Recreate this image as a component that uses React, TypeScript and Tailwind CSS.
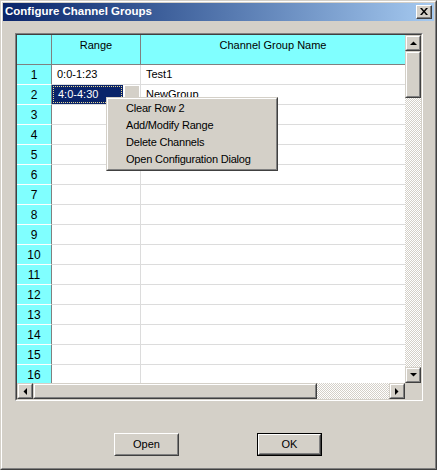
import React from "react";

// Win2k raised look used by scroll bar parts
function ScrollPart({ className = "", children }: { className?: string; children?: React.ReactNode }) {
  return (
    <div className={`bg-[#d4d0c8] border border-t-[#d4d0c8] border-l-[#d4d0c8] border-r-[#404040] border-b-[#404040] ${className}`}>
      <div className="w-full h-full border border-t-white border-l-white border-r-[#808080] border-b-[#808080] flex items-center justify-center">
        {children}
      </div>
    </div>
  );
}

function Arrow({ dir }: { dir: "up" | "down" | "left" | "right" }) {
  const pts = {
    up: "0,4 7,4 3.5,0.5",
    down: "0,0 7,0 3.5,3.5",
    left: "4,0 4,7 0.5,3.5",
    right: "0,0 0,7 3.5,3.5",
  }[dir];
  const vert = dir === "up" || dir === "down";
  return (
    <svg width={vert ? 7 : 4} height={vert ? 4 : 7} viewBox={vert ? "0 0 7 4" : "0 0 4 7"}>
      <polygon points={pts} fill="#000" />
    </svg>
  );
}

const dither =
  "[background-image:repeating-conic-gradient(#ffffff_0%_25%,#d4d0c8_0%_50%)] [background-size:2px_2px]";

function PushButton({ label, isDefault }: { label: string; isDefault?: boolean }) {
  const inner = (
    <div className="w-full h-full bg-[#d4d0c8] border border-t-white border-l-white border-r-[#404040] border-b-[#404040]">
      <div className="w-full h-full border border-t-[#d4d0c8] border-l-[#d4d0c8] border-r-[#808080] border-b-[#808080] flex items-center justify-center text-[11px]">
        {label}
      </div>
    </div>
  );
  return isDefault ? (
    <div className="w-[65px] h-[23px] border border-black">{inner}</div>
  ) : (
    <div className="w-[65px] h-[23px]">{inner}</div>
  );
}

export default function App() {
  const rows = Array.from({ length: 16 }, (_, i) => i + 1);
  const data: Record<number, [string, string]> = {
    1: ["0:0-1:23", "Test1"],
    2: ["4:0-4:30", "NewGroup"],
  };

  return (
    <div className="w-[437px] h-[470px] bg-[#d4d0c8] font-['Liberation_Sans',Arial,sans-serif] text-[11px] text-black border border-t-[#d4d0c8] border-l-[#d4d0c8] border-r-[#404040] border-b-[#404040]">
      <div className="h-full border border-t-white border-l-white border-r-[#808080] border-b-[#808080] p-px flex flex-col">
        {/* Title bar */}
        <div className="h-[18px] shrink-0 flex items-center justify-between pl-[2px] pr-[2px] bg-linear-to-r from-[#0a246a] to-[#a6caf0]">
          <span className="text-white font-bold text-[11.5px] leading-none">Configure Channel Groups</span>
          <div className="w-[16px] h-[14px] bg-[#d4d0c8] border border-t-white border-l-white border-r-[#404040] border-b-[#404040]">
            <div className="w-full h-full border-r border-b border-[#808080] flex items-center justify-center">
              <svg width="8" height="7" viewBox="0 0 8 7">
                <path d="M0 0h2l2 2.5L6 0h2L5 3.5 8 7H6L4 4.5 2 7H0l3-3.5z" fill="#000" />
              </svg>
            </div>
          </div>
        </div>

        {/* Grid frame (sunken) */}
        <div className="ml-[12px] mt-[12px] w-[408px] h-[368px] border border-t-[#808080] border-l-[#808080] border-r-white border-b-white">
          <div className="w-full h-full border border-t-[#404040] border-l-[#404040] border-r-[#d4d0c8] border-b-[#d4d0c8] flex flex-col">
            <div className="flex h-[348px]">
              {/* Cells */}
              <div className="w-[388px] h-full overflow-hidden relative bg-white">
                <div className="flex h-[30px] bg-[#80ffff] border-b border-[#808080]">
                  <div className="w-[35px] border-r border-[#808080]" />
                  <div className="w-[89px] border-r border-[#808080] text-center pt-[2px]">Range</div>
                  <div className="flex-1 text-center pt-[2px]">Channel Group Name</div>
                </div>
                {rows.map((r) => {
                  const d = data[r];
                  return (
                    <div key={r} className="flex h-[20px]">
                      <div className="w-[35px] bg-[#80ffff] border-r border-r-[#808080] border-b border-b-white flex items-center justify-center text-[12px]">
                        {r}
                      </div>
                      <div className="w-[89px] border-r border-b border-[#dcdcdc] flex items-center">
                        {r === 2 ? (
                          <>
                            <div className="w-[71px] h-full bg-[#0a246a] text-white p-px">
                              <div className="w-full h-full border border-dotted border-[#e8d890] flex items-center pl-[4px]">
                                {d[0]}
                              </div>
                            </div>
                            <div className="ml-px w-[15px] h-full bg-[#d4d0c8] border-t border-l border-white" />
                          </>
                        ) : (
                          <span className="pl-[5px]">{d ? d[0] : ""}</span>
                        )}
                      </div>
                      <div className="flex-1 border-b border-[#dcdcdc] flex items-center pl-[5px]">
                        {d ? d[1] : ""}
                      </div>
                    </div>
                  );
                })}

                {/* Context menu */}
                <div className="absolute left-[89px] top-[62px] w-[172px] h-[74px] bg-[#d4d0c8] border border-t-[#d4d0c8] border-l-[#d4d0c8] border-r-[#404040] border-b-[#404040]">
                  <div className="w-full h-full border border-t-white border-l-white border-r-[#808080] border-b-[#808080] py-px">
                    {["Clear Row 2", "Add/Modify Range", "Delete Channels", "Open Configuration Dialog"].map((t) => (
                      <div key={t} className="h-[17px] flex items-center pl-[18px] tracking-[-0.2px]">
                        {t}
                      </div>
                    ))}
                  </div>
                </div>
              </div>

              {/* Vertical scroll bar */}
              <div className="w-[16px] h-full flex flex-col">
                <ScrollPart className="h-[16px]">
                  <Arrow dir="up" />
                </ScrollPart>
                <ScrollPart className="h-[47px]" />
                <div className={`flex-1 ${dither}`} />
                <ScrollPart className="h-[16px]">
                  <Arrow dir="down" />
                </ScrollPart>
              </div>
            </div>

            {/* Horizontal scroll bar */}
            <div className="flex h-[16px]">
              <div className="w-[388px] flex">
                <ScrollPart className="w-[16px]">
                  <Arrow dir="left" />
                </ScrollPart>
                <ScrollPart className="w-[284px]" />
                <div className={`flex-1 ${dither}`} />
                <ScrollPart className="w-[16px]">
                  <Arrow dir="right" />
                </ScrollPart>
              </div>
              <div className="w-[16px] bg-[#d4d0c8]" />
            </div>
          </div>
        </div>

        {/* Buttons */}
        <div className="flex mt-[32px] ml-[111px]">
          <PushButton label="Open" />
          <div className="ml-[78px]">
            <PushButton label="OK" isDefault />
          </div>
        </div>
      </div>
    </div>
  );
}
